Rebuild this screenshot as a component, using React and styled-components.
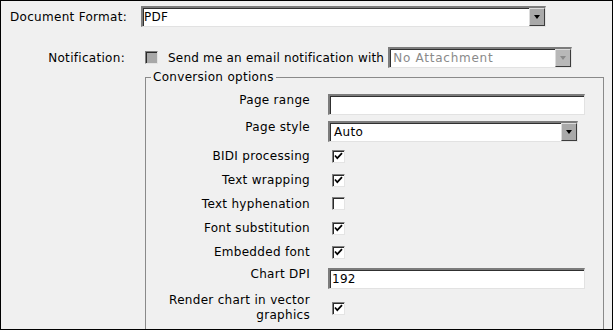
import React from 'react';
import styled, { createGlobalStyle } from 'styled-components';

const GlobalStyle = createGlobalStyle`
    html, body {
        margin: 0;
        padding: 0;
        background: #f0f0f0;
    }

    body {
        font-family: "DejaVu Sans", Verdana, sans-serif;
        font-size: 12px;
        letter-spacing: 0.3px;
        color: #000;
    }
`;

const Frame = styled.div`
    box-sizing: border-box;
    width: 613px;
    height: 330px;
    border: 1px solid #000;
    background: #f0f0f0;
    overflow: hidden;
    padding-top: 5px;
    display: flex;
    flex-direction: column;
`;

const TopRow = styled.div`
    display: grid;
    grid-template-columns: 115px auto;
    column-gap: 16px;
    align-items: center;
    padding-left: 9px;
    margin-top: ${props => props.$gap || 0}px;
`;

const TopLabel = styled.div`
    text-align: right;
    white-space: nowrap;
`;

const NotifyLine = styled.div`
    display: flex;
    align-items: center;
`;

const NotifyText = styled.span`
    margin: 0 4px 0 10px;
    letter-spacing: 0.2px;
    white-space: nowrap;
`;

const SelectBox = styled.div`
    box-sizing: border-box;
    width: ${props => props.$width}px;
    height: 21px;
    display: flex;
    align-items: stretch;
    justify-content: space-between;
    background: #fff;
    border-style: solid;
    border-width: 2px 1px 1px 2px;
    border-color: #7c7c7c #e2e2e2 #e2e2e2 #7c7c7c;
    box-shadow: inset 1px 1px 0 #303030;
    color: ${props => (props.$disabled ? '#8a8a8a' : '#000')};
    letter-spacing: ${props => (props.$disabled ? '0.75px' : '0.3px')};
`;

const SelectValue = styled.span`
    display: flex;
    align-items: center;
    padding-left: ${props => props.$pad}px;
    white-space: nowrap;
`;

const ArrowButton = styled.span`
    box-sizing: border-box;
    width: 16px;
    display: flex;
    align-items: center;
    justify-content: center;
    background: ${props => (props.$disabled ? '#b8b8b8' : '#a9a9a9')};
    border-style: solid;
    border-width: 1px;
    border-color: #dcdcdc #3c3c3c #3c3c3c #dcdcdc;

    &:after {
        content: '';
        border-style: solid;
        border-width: 4px 3.5px 0 3.5px;
        border-color: ${props => (props.$disabled ? '#8a8a8a' : '#000')} transparent transparent transparent;
    }
`;

const BoxMark = styled.span`
    box-sizing: border-box;
    width: 13px;
    height: 13px;
    flex: none;
    display: inline-flex;
    align-items: center;
    justify-content: center;
    margin-left: ${props => props.$offset || 0}px;
    background: ${props => (props.$disabled ? '#a8a8a8' : '#fff')};
    border-style: solid;
    border-width: 1px;
    border-color: #808080 #e4e4e4 #e4e4e4 #808080;
    box-shadow: inset 1px 1px 0 #2a2a2a;
`;

const Group = styled.fieldset`
    box-sizing: border-box;
    width: 459px;
    min-width: 0;
    margin: 2px 0 0 144px;
    padding: 6px 17px 30px 0;
    border: 1px solid #8a8a8a;
`;

const Legend = styled.legend`
    margin-left: 5px;
    padding: 0 2px;
    line-height: 15px;
`;

const Row = styled.div`
    display: grid;
    grid-template-columns: 164px 1fr;
    column-gap: 18px;
    align-items: center;
    min-height: 24px;
`;

const Label = styled.div`
    text-align: right;
    line-height: 15px;
    align-self: ${props => (props.$top ? 'start' : 'center')};
    padding: ${props => (props.$top ? '2px 0 0' : '1px 0 3px')};
`;

const TextInput = styled.input`
    box-sizing: border-box;
    width: 257px;
    height: 21px;
    margin: 3px 0;
    padding: 0 2px;
    background: #fff;
    font: inherit;
    letter-spacing: inherit;
    color: #000;
    border-style: solid;
    border-width: 2px 1px 1px 2px;
    border-color: #7c7c7c #e2e2e2 #e2e2e2 #7c7c7c;
    box-shadow: inset 1px 1px 0 #303030;
    outline: none;
`;

const SelectCell = styled.div`
    margin: 3px 0;
`;

const Select = ({ width, value, pad = 2, disabled }) => (
    <SelectBox $width={width} $disabled={disabled}>
        <SelectValue $pad={pad}>{value}</SelectValue>
        <ArrowButton $disabled={disabled} />
    </SelectBox>
);

const Check = ({ checked, disabled, offset }) => (
    <BoxMark $disabled={disabled} $offset={offset}>
        {checked && (
            <svg width="9" height="9" viewBox="0 0 9 9">
                <path d="M1 3.5 L3.3 6.2 L8 1.2" fill="none" stroke="#000" strokeWidth="1.7" />
            </svg>
        )}
    </BoxMark>
);

const checkRows = [
    { label: 'BIDI processing', checked: true },
    { label: 'Text wrapping', checked: true },
    { label: 'Text hyphenation', checked: false },
    { label: 'Font substitution', checked: true },
    { label: 'Embedded font', checked: true },
];

export default function App() {
    return (
        <>
            <GlobalStyle />
            <Frame>
                <TopRow>
                    <TopLabel>Document Format:</TopLabel>
                    <Select width={405} value="PDF" pad={1} />
                </TopRow>
                <TopRow $gap={20}>
                    <TopLabel>Notification:</TopLabel>
                    <NotifyLine>
                        <Check disabled offset={4} />
                        <NotifyText>Send me an email notification with</NotifyText>
                        <Select width={184} value="No Attachment" pad={3} disabled />
                    </NotifyLine>
                </TopRow>
                <Group>
                    <Legend>Conversion options</Legend>
                    <Row>
                        <Label $top>Page range</Label>
                        <TextInput readOnly value="" />
                    </Row>
                    <Row>
                        <Label $top>Page style</Label>
                        <SelectCell>
                            <Select width={250} value="Auto" pad={4} />
                        </SelectCell>
                    </Row>
                    {checkRows.map(row => (
                        <Row key={row.label}>
                            <Label>{row.label}</Label>
                            <div>
                                <Check checked={row.checked} offset={4} />
                            </div>
                        </Row>
                    ))}
                    <Row>
                        <Label $top>Chart DPI</Label>
                        <TextInput readOnly value="192" />
                    </Row>
                    <Row>
                        <Label>Render chart in vector graphics</Label>
                        <div>
                            <Check checked offset={4} />
                        </div>
                    </Row>
                </Group>
            </Frame>
        </>
    );
}
